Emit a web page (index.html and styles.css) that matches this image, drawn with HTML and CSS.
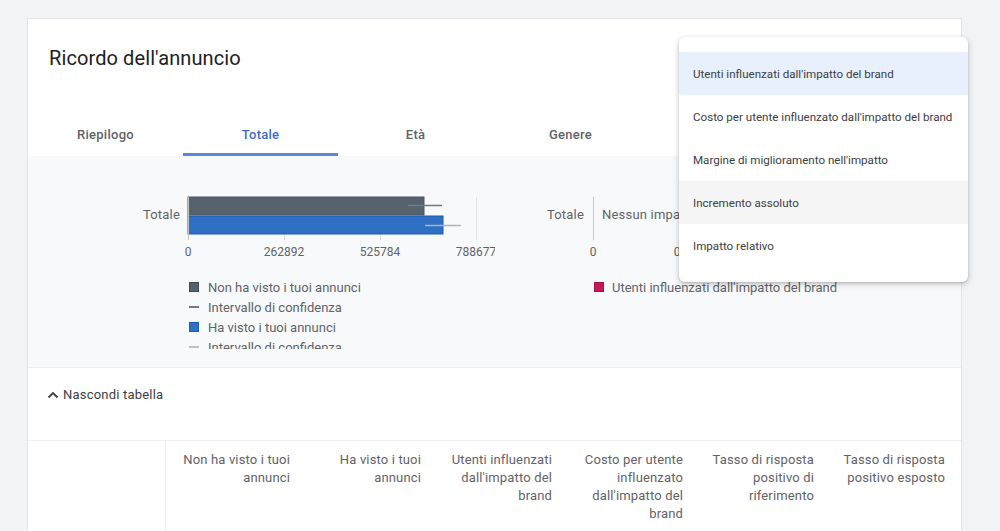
FILE: index.html
```html
<!DOCTYPE html>
<html lang="it">
<head>
<meta charset="utf-8">
<title>Ricordo dell'annuncio</title>
<link rel="stylesheet" href="styles.css">
</head>
<body>
<div class="card">
  <div class="card-head">
    <h1 class="title">Ricordo dell'annuncio</h1>
  </div>
  <div class="tabs">
    <div class="tab">Riepilogo</div>
    <div class="tab active">Totale</div>
    <div class="tab">Età</div>
    <div class="tab">Genere</div>
  </div>
  <div class="charts">
    <div class="chart chart-left">
      <svg class="plot" width="467" height="110" viewBox="0 0 467 110">
        <text class="lbl lbl-cat" x="152" y="63" text-anchor="end">Totale</text>
        <line x1="448.5" y1="41" x2="448.5" y2="84" stroke="#e3e5e8" stroke-width="1"/>
        <line x1="256.5" y1="78" x2="256.5" y2="84" stroke="#dadce0" stroke-width="1"/>
        <line x1="352.5" y1="78" x2="352.5" y2="84" stroke="#dadce0" stroke-width="1"/>
        <rect x="160" y="41" width="236" height="18" fill="#56636c" stroke="#4b5760" stroke-width="1"/>
        <rect x="160" y="60" width="255" height="18" fill="#2f6fc4" stroke="#1d5cb0" stroke-width="1"/>
        <line x1="380" y1="49.5" x2="414" y2="49.5" stroke="#6f7b84" stroke-width="1.5"/>
        <line x1="397" y1="69.5" x2="433" y2="69.5" stroke="#a9b4c0" stroke-width="1.5"/>
        <line x1="160.5" y1="41" x2="160.5" y2="84" stroke="#c4c7cc" stroke-width="1"/>
        <text class="lbl" x="160" y="100" text-anchor="middle">0</text>
        <text class="lbl" x="256" y="100" text-anchor="middle">262892</text>
        <text class="lbl" x="352" y="100" text-anchor="middle">525784</text>
        <text class="lbl" x="448" y="100" text-anchor="middle">788677</text>
      </svg>
      <ul class="legend">
        <li class="legend-item"><span class="swatch sw-gray"></span>Non ha visto i tuoi annunci</li>
        <li class="legend-item"><span class="dash dash-dark"></span>Intervallo di confidenza</li>
        <li class="legend-item"><span class="swatch sw-blue"></span>Ha visto i tuoi annunci</li>
        <li class="legend-item"><span class="dash dash-light"></span>Intervallo di confidenza</li>
      </ul>
    </div>
    <div class="chart chart-right">
      <svg class="plot" width="441" height="110" viewBox="0 0 441 110">
        <text class="lbl lbl-cat" x="64" y="63" text-anchor="end">Totale</text>
        <line x1="73.5" y1="41" x2="73.5" y2="84" stroke="#c4c7cc" stroke-width="1"/>
        <text class="lbl lbl-cat" x="82" y="63">Nessun impatto rilevato</text>
        <text class="lbl" x="73" y="100" text-anchor="middle">0</text>
        <text class="lbl" x="157" y="100" text-anchor="middle">0</text>
      </svg>
      <ul class="legend legend-right">
        <li class="legend-item"><span class="swatch sw-red"></span>Utenti influenzati dall'impatto del brand</li>
      </ul>
    </div>
  </div>
  <div class="toggle-row">
    <svg class="chevron" width="14" height="14" viewBox="0 0 14 14"><path d="M2.5 9.5 L7 5 L11.5 9.5" fill="none" stroke="#3c4043" stroke-width="1.8"/></svg>
    <span>Nascondi tabella</span>
  </div>
  <div class="table-head">
    <div class="th th-first"></div>
    <div class="th">Non ha visto i tuoi annunci</div>
    <div class="th">Ha visto i tuoi annunci</div>
    <div class="th">Utenti influenzati dall'impatto del brand</div>
    <div class="th">Costo per utente influenzato dall'impatto del brand</div>
    <div class="th">Tasso di risposta positivo di riferimento</div>
    <div class="th">Tasso di risposta positivo esposto</div>
  </div>
</div>
<ul class="menu">
  <li class="menu-item selected">Utenti influenzati dall'impatto del brand</li>
  <li class="menu-item">Costo per utente influenzato dall'impatto del brand</li>
  <li class="menu-item">Margine di miglioramento nell'impatto</li>
  <li class="menu-item hover">Incremento assoluto</li>
  <li class="menu-item">Impatto relativo</li>
</ul>
</body>
</html>
```

FILE: styles.css
```css
* { box-sizing: border-box; }
html, body { margin: 0; padding: 0; }
body {
  background: #f1f3f4;
  font-family: Roboto, "Noto Sans", "Liberation Sans", sans-serif;
  color: #3c4043;
  overflow: hidden;
  height: 531px;
}
.card {
  margin: 18px 0 0 27px;
  width: 935px;
  min-height: 600px;
  background: #fff;
  border: 1px solid #e2e4e7;
}
.card-head {
  height: 91px;
  padding: 26px 0 0 21px;
}
.title {
  margin: 0;
  font-size: 20px;
  font-weight: 400;
  line-height: 26px;
  color: #202124;
  letter-spacing: 0.1px;
}
.tabs {
  display: flex;
  height: 46px;
}
.tab {
  width: 155px;
  height: 46px;
  display: flex;
  align-items: center;
  justify-content: center;
  font-size: 13px;
  font-weight: 500;
  letter-spacing: 0.25px;
  color: #5f6368;
  padding-top: 2px;
}
.tab.active {
  color: #3f6ccc;
  border-bottom: 3px solid #5c88dc;
  padding-top: 5px;
}
.charts {
  background: #f8f9fa;
  display: grid;
  grid-template-columns: 492px 1fr;
  height: 212px;
  border-bottom: 1px solid #eceef0;
}
.plot { display: block; overflow: hidden; }
.lbl {
  font-family: Roboto, "Noto Sans", "Liberation Sans", sans-serif;
  font-size: 12px;
  fill: #5f6368;
}
.lbl-cat { font-size: 13px; letter-spacing: 0.2px; }
.legend {
  list-style: none;
  margin: 11px 0 0 0;
  padding: 0 0 0 161px;
  height: 72px;
  overflow: hidden;
}
.legend-right { padding-left: 73px; }
.legend-item {
  display: flex;
  align-items: center;
  height: 20px;
  font-size: 13px;
  color: #5f6368;
  white-space: nowrap;
}
.swatch {
  width: 10px;
  height: 10px;
  margin-right: 9px;
  flex: none;
}
.sw-gray { background: #56636c; border: 1px solid #3f4a52; }
.sw-blue { background: #2f6fc4; border: 1px solid #1d5cb0; }
.sw-red { background: #c8185a; border: 1px solid #a8104a; margin-left: 1px; margin-right: 8px; }
.dash {
  width: 10px;
  height: 2px;
  margin-right: 9px;
  flex: none;
}
.dash-dark { background: #6f7b84; }
.dash-light { background: #b9c1c9; }
.toggle-row {
  height: 72px;
  display: flex;
  align-items: flex-start;
  padding: 18px 0 0 18px;
  font-size: 13px;
  letter-spacing: 0.2px;
  line-height: 18px;
  color: #3c4043;
  gap: 3px;
}
.chevron { margin-top: 2px; }
.table-head {
  display: flex;
  border-top: 1px solid #eceef0;
  min-height: 100px;
}
.th {
  width: 131px;
  padding: 10px 7px 0 9px;
  text-align: right;
  font-size: 13px;
  letter-spacing: 0.15px;
  line-height: 18px;
  color: #5f6368;
}
.th-first {
  width: 138px;
  border-right: 1px solid #f0f1f3;
}
.menu {
  position: absolute;
  left: 679px;
  top: 37px;
  width: 289px;
  margin: 0;
  padding: 15px 0;
  list-style: none;
  background: #fff;
  border-radius: 6px;
  box-shadow: 0 2px 6px rgba(0,0,0,0.22), 0 1px 2px rgba(0,0,0,0.12);
}
.menu-item {
  height: 43px;
  display: flex;
  align-items: center;
  padding-left: 14px;
  font-size: 11.6px;
  color: #3c4043;
  white-space: nowrap;
}
.menu-item.selected { background: #e8f0fe; }
.menu-item.hover { background: #f5f5f5; }
```
